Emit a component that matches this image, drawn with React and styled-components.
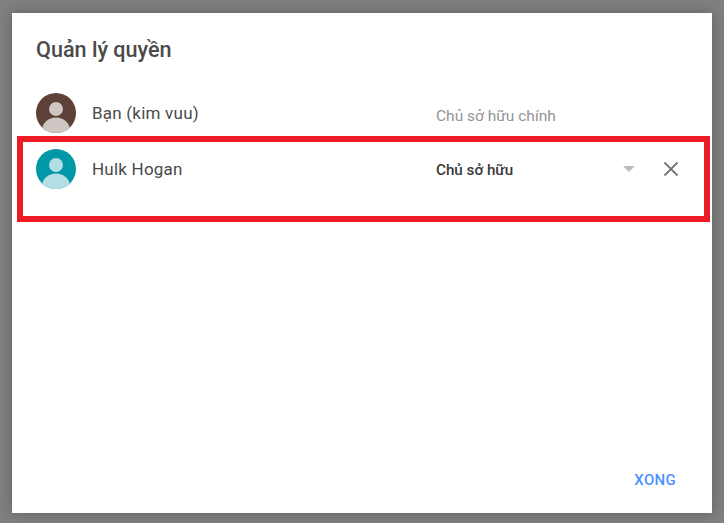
import styled, { createGlobalStyle } from "styled-components";

const GlobalStyle = createGlobalStyle`
  html, body {
    margin: 0;
    padding: 0;
    height: 100%;
    overflow: hidden;
    background: #808080;
    font-family: Roboto, "Noto Sans", sans-serif;
  }
`;

const Overlay = styled.div`
  width: 724px;
  height: 523px;
  padding: 13px 12px 10px;
  box-sizing: border-box;
  background: #808080;
`;

const Dialog = styled.div`
  position: relative;
  width: 700px;
  height: 500px;
  box-sizing: border-box;
  padding: 24px;
  display: flex;
  flex-direction: column;
  background: #ffffff;
  box-shadow: 0 0 14px rgba(0, 0, 0, 0.25);
`;

const Title = styled.h2`
  margin: 0 0 28px;
  height: 28px;
  line-height: 26px;
  font-size: 21.6px;
  font-weight: 500;
  color: #4a4a4a;
`;

const List = styled.div`
  flex: 1;
  display: flex;
  flex-direction: column;
  gap: 16px;
`;

const Row = styled.div`
  display: flex;
  align-items: flex-start;
  height: 40px;
`;

const Avatar = styled.svg`
  width: 40px;
  height: 40px;
  flex: none;
  margin-right: 16px;
`;

const Name = styled.div`
  width: 344px;
  flex: none;
  font-size: 17px;
  line-height: 20px;
  letter-spacing: 0.22px;
  color: #4a4a4a;
  margin-top: 10px;
`;

const Role = styled.div`
  width: 180px;
  flex: none;
  line-height: 20px;
  margin-top: ${(p) => (p.$owner ? "13px" : "11px")};
  font-size: ${(p) => (p.$owner ? "15.5px" : "15.2px")};
  color: ${(p) => (p.$owner ? "#949494" : "#3a3a3a")};
  font-weight: ${(p) => (p.$owner ? 400 : 500)};
`;

const Caret = styled.svg`
  width: 12px;
  height: 6px;
  flex: none;
  margin-top: 17px;
  margin-left: 7px;
`;

const Remove = styled.svg`
  width: 16px;
  height: 16px;
  flex: none;
  margin-top: 12px;
  margin-left: 28px;
`;

const Footer = styled.div`
  display: flex;
  justify-content: flex-end;
  padding-right: 12px;
`;

const Done = styled.button`
  border: 0;
  padding: 0;
  background: none;
  font-family: inherit;
  font-size: 15px;
  font-weight: 500;
  line-height: 20px;
  letter-spacing: 0.3px;
  color: #4d90fe;
  position: relative;
  top: 1px;
`;

const Highlight = styled.div`
  position: absolute;
  left: 5px;
  top: 123px;
  width: 693px;
  height: 86px;
  box-sizing: border-box;
  border: 6px solid #ed1c24;
  pointer-events: none;
`;

function UserAvatar({ bg, fg }) {
  const clip = `clip-${bg.slice(1)}`;
  return (
    <Avatar viewBox="0 0 40 40">
      <defs>
        <clipPath id={clip}>
          <circle cx="20" cy="20" r="20" />
        </clipPath>
      </defs>
      <circle cx="20" cy="20" r="20" fill={bg} />
      <g clipPath={`url(#${clip})`} fill={fg}>
        <circle cx="20" cy="16" r="7" />
        <ellipse cx="20" cy="37" rx="14" ry="12.5" />
      </g>
    </Avatar>
  );
}

export default function App() {
  return (
    <>
      <GlobalStyle />
      <Overlay>
        <Dialog>
          <Title>Quản lý quyền</Title>
          <List>
            <Row>
              <UserAvatar bg="#5d4037" fg="#cec6c3" />
              <Name>Bạn (kim vuu)</Name>
              <Role $owner>Chủ sở hữu chính</Role>
            </Row>
            <Row>
              <UserAvatar bg="#0097a7" fg="#b2dfe5" />
              <Name>Hulk Hogan</Name>
              <Role>Chủ sở hữu</Role>
              <Caret viewBox="0 0 12 6">
                <path d="M0 0h12L6 6z" fill="#bdbdbd" />
              </Caret>
              <Remove viewBox="0 0 16 16">
                <path d="M1.5 1.5l13 13M14.5 1.5l-13 13" stroke="#757575" strokeWidth="1.8" fill="none" />
              </Remove>
            </Row>
          </List>
          <Footer>
            <Done>XONG</Done>
          </Footer>
          <Highlight />
        </Dialog>
      </Overlay>
    </>
  );
}
